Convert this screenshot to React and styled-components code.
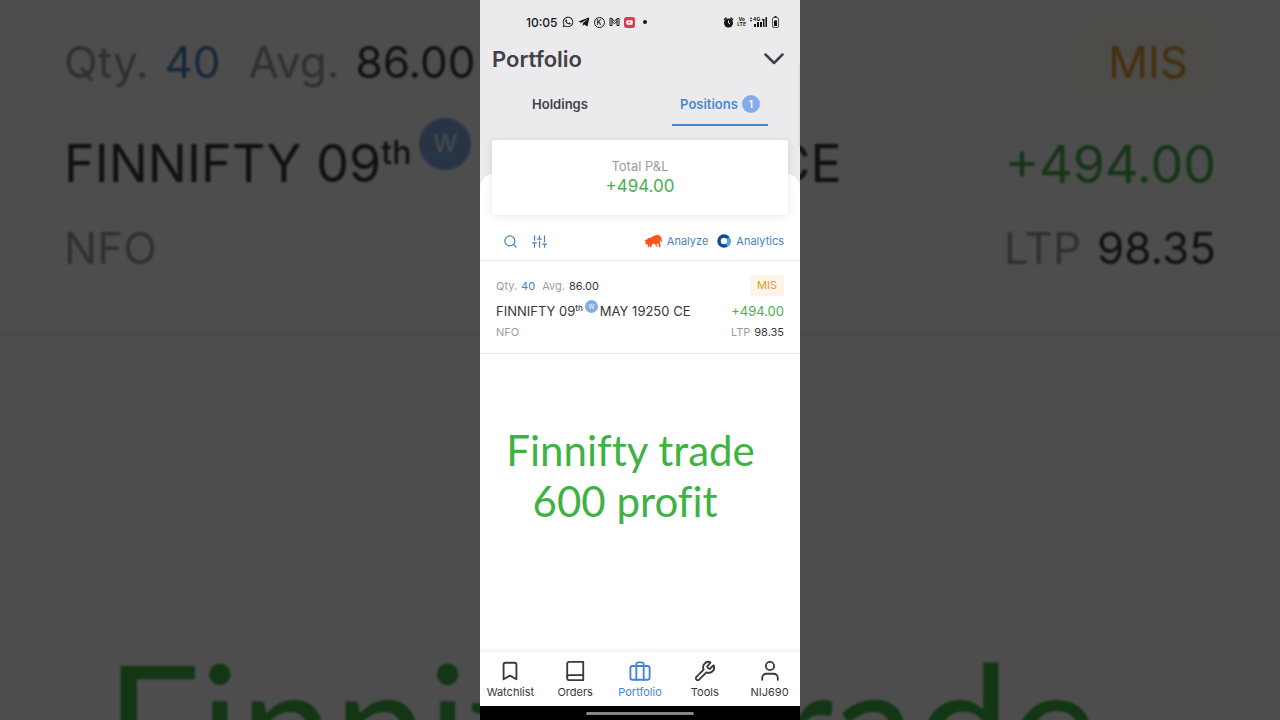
import React from "react"
import styled, { createGlobalStyle } from "styled-components"
import { Bookmark, Wrench, User, Search } from "lucide-react"
import { FaWhatsapp, FaTelegramPlane } from "react-icons/fa"

const GlobalStyle = createGlobalStyle`
    * {
        box-sizing: border-box;
    }
    body {
        margin: 0;
        background: black;
        font-family: Inter, "Liberation Sans", sans-serif;
        color: #424148;
    }
    button {
        font-family: inherit;
        color: inherit;
        background: none;
        border: none;
        padding: 0;
        cursor: pointer;
    }
    a {
        text-decoration: none;
    }
`

const Stage = styled.div`
    display: grid;
    min-height: 100vh;
`

/* enlarged, dimmed copy of the screen that fills the sides */
const Backdrop = styled.div`
    grid-area: 1 / 1;
    height: 100vh;
    overflow: hidden;
    background: white;
    opacity: 0.3;
`

const BackdropContent = styled.div`
    margin-top: -36px;
    filter: blur(1px);
`

const Phone = styled.main`
    grid-area: 1 / 1;
    justify-self: center;
    position: relative;
    display: flex;
    flex-direction: column;
    width: 100%;
    max-width: 320px;
    min-height: 100vh;
    overflow: hidden;
    background: #ebebed;
`

const StatusBar = styled.div`
    display: flex;
    align-items: center;
    justify-content: space-between;
    height: 40px;
    padding: 4px 21px 0 46px;
    color: #161618;
`

const StatusGroup = styled.div`
    display: flex;
    align-items: center;
    gap: ${props => props.$gap}px;
`

const Clock = styled.span`
    font-size: 12px;
    font-weight: 500;
`

const RoundLetter = styled.span`
    width: 11px;
    height: 11px;
    border: 1px solid #161618;
    border-radius: 50%;
    font-size: 7px;
    font-weight: 600;
    line-height: 9px;
    text-align: center;
`

const Dot = styled.span`
    width: 4px;
    height: 4px;
    margin-left: 4px;
    border-radius: 50%;
    background: #161618;
`

const Volte = styled.span`
    font-size: 5px;
    font-weight: 700;
    line-height: 5px;
    text-align: center;
`

const TitleRow = styled.header`
    display: flex;
    align-items: center;
    justify-content: space-between;
    height: 38px;
    padding: 0 16px 0 12px;

    h1 {
        margin: 0;
        font-size: 22px;
        font-weight: 600;
    }
    button {
        display: flex;
    }
`

const Tabs = styled.div`
    display: grid;
    grid-template-columns: 1fr 1fr;
    height: 48px;
    padding: 6px 0 0;
    margin-bottom: 48px;
`

const Tab = styled.button`
    && {
        display: flex;
        align-items: center;
        justify-self: center;
        gap: 4px;
        padding: 0 8px;
        font-size: 13px;
        font-weight: 600;
        color: ${props => props.$active ? "#4987d0" : "#424148"};
        border-bottom: 2px solid ${props => props.$active ? "#4987d0" : "transparent"};
    }
`

const Count = styled.span`
    width: 18px;
    height: 18px;
    border-radius: 50%;
    background: #82ade9;
    color: white;
    font-size: 10px;
    line-height: 18px;
    text-align: center;
`

const ScrollMark = styled.div`
    position: absolute;
    top: 63px;
    right: 0;
    width: 2px;
    height: 84px;
    border-radius: 2px 0 0 2px;
    background: #dedee0;
`

const Sheet = styled.section`
    flex: 1;
    display: flex;
    flex-direction: column;
    background: white;
    border-radius: 14px 14px 0 0;
`

const TotalCard = styled.div`
    display: flex;
    flex-direction: column;
    align-items: center;
    justify-content: center;
    height: 75px;
    margin: -34px 12px 0;
    padding-bottom: 1px;
    background: white;
    border-radius: 3px;
    box-shadow: 0 1px 8px rgba(0, 0, 0, 0.1);
`

const TotalLabel = styled.span`
    font-size: 13px;
    line-height: 18px;
    color: #9d9ca4;
`

const TotalValue = styled.span`
    font-size: 17px;
    line-height: 22px;
    color: #4caf50;
`

const Toolbar = styled.div`
    display: flex;
    align-items: center;
    justify-content: space-between;
    height: 46px;
    padding: 7px 16px 0 23px;
    border-bottom: 1px solid #ececee;
    color: #4a80bb;
`

const ToolGroup = styled.div`
    display: flex;
    align-items: center;
    gap: ${props => props.$gap}px;

    button {
        display: flex;
    }
`

const ToolLink = styled.a`
    display: flex;
    align-items: center;
    gap: 5px;
    font-size: 11px;
    color: #4a80bb;
`

/* $k is the magnification: 1 on the phone, 4 in the backdrop */
const PositionBox = styled.article`
    display: flex;
    flex-direction: column;
    padding: ${props => 14 * props.$k}px ${props => 16 * props.$k}px ${props => 13 * props.$k}px;
    border-bottom: ${props => props.$k}px solid #ececee;
    font-size: ${props => 11 * props.$k}px;
`

const Line = styled.div`
    display: flex;
    align-items: center;
    justify-content: space-between;
    height: ${props => props.$h * props.$k}px;
    margin-bottom: ${props => (props.$mb || 0) * props.$k}px;
`

const Figures = styled.div`
    display: flex;
    gap: ${props => 4 * props.$k}px;
    color: #9d9ca4;

    b {
        font-weight: 400;
        color: #38373d;
    }
    b.qty {
        color: #4a80bb;
        margin-right: ${props => 3 * props.$k}px;
    }
`

const Product = styled.span`
    padding: 0 ${props => 7 * props.$k}px;
    line-height: ${props => 21 * props.$k}px;
    background: ${props => props.$k > 1 ? "#fffaf0" : "#fef5e8"};
    color: #dd9a2b;
`

const Instrument = styled.div`
    display: flex;
    align-items: center;
    font-size: ${props => 13 * props.$k}px;
    line-height: ${props => 18 * props.$k}px;
    color: #38373d;

    sup {
        font-size: ${props => 8 * props.$k}px;
        font-weight: 500;
        line-height: 0;
    }
`

const Weekly = styled.span`
    width: ${props => 13 * props.$k}px;
    height: ${props => 13 * props.$k}px;
    margin: 0 ${props => 2 * props.$k}px ${props => 10 * props.$k}px;
    border-radius: 50%;
    background: #82ade9;
    color: white;
    font-size: ${props => 6 * props.$k}px;
    line-height: ${props => 13 * props.$k}px;
    text-align: center;
`

const Profit = styled.span`
    font-size: ${props => 13 * props.$k}px;
    color: #4caf50;
`

const Caption = styled.p`
    flex: 1;
    margin: 0;
    padding: ${props => 71 * props.$k}px ${props => 19 * props.$k}px 0 0;
    font-family: Lato, "Liberation Sans", sans-serif;
    font-size: ${props => 42 * props.$k}px;
    font-weight: 400;
    line-height: ${props => 51 * props.$k}px;
    font-variant-ligatures: none;
    text-align: center;
    white-space: nowrap;
    color: #3fb244;
`

const NavBar = styled.nav`
    display: flex;
    height: 54px;
    padding-top: 8px;
    margin: 0 -2px;
    background: white;
    box-shadow: 0 -1px 6px rgba(0, 0, 0, 0.08);
`

const NavItem = styled.a`
    flex: 1 1 0;
    display: flex;
    flex-direction: column;
    align-items: center;
    gap: 3px;
    font-size: 11px;
    line-height: 14px;
    color: ${props => props.$active ? "#4184d9" : "#38373d"};
`

const GestureBar = styled.div`
    display: flex;
    justify-content: center;
    align-items: center;
    height: 14px;
    background: black;

    span {
        width: 108px;
        height: 3px;
        border-radius: 2px;
        background: #858585;
    }
`

const stroke = {
    fill: "none",
    stroke: "currentColor",
    strokeWidth: 2,
    strokeLinecap: "round",
    strokeLinejoin: "round"
}

const OrdersIcon = () => (
    <svg width="22" height="22" viewBox="0 0 24 24" {...stroke}>
        <path d="M5.500 2H21v20H5.500A2 2 0 0 1 3.500 20V4a2 2 0 0 1 2-2z" />
        <path d="M3.500 18.500a2 2 0 0 1 2-2H21" />
    </svg>
)

const PortfolioIcon = () => (
    <svg width="22" height="22" viewBox="0 0 24 24" {...stroke}>
        <rect x="1.500" y="6.500" width="21" height="15" rx="2.500" />
        <path d="M8 21.500V4.500a2 2 0 0 1 2-2h4a2 2 0 0 1 2 2v17" />
    </svg>
)

const UserIcon = () => (
    <svg width="22" height="22" viewBox="0 0 24 24" {...stroke}>
        <circle cx="12" cy="6.500" r="4.500" />
        <path d="M3.500 21.500v-2a4.500 4.500 0 0 1 4.500-4.500h8a4.500 4.500 0 0 1 4.500 4.500v2" />
    </svg>
)

const ChevronIcon = () => (
    <svg width="20" height="12" viewBox="0 0 20 12" {...stroke} strokeWidth="2.500">
        <path d="M1.500 1.500L10 10l8.500-8.500" />
    </svg>
)

const SlidersIcon = () => (
    <svg width="15" height="15" viewBox="0 0 24 24" {...stroke}>
        <path d="M4 21v-7M4 10V3M12 21v-9M12 8V3M20 21v-5M20 12V3M1 14h6M9 8h6M17 16h6" />
    </svg>
)

const MailIcon = () => (
    <svg width="11" height="10" viewBox="0 0 22 20" {...stroke}>
        <path d="M2 3v14h4V9l5 4 5-4v8h4V3h-3l-6 5-6-5zM6 9V4M16 9V4" />
    </svg>
)

const VideoIcon = () => (
    <svg width="11" height="11" viewBox="0 0 24 24">
        <rect width="24" height="24" rx="6" fill="#dd3a4d" />
        <rect x="5" y="7" width="14" height="10" rx="3" fill="white" />
        <path d="M10 9.500v5l4-2.500z" fill="#dd3a4d" />
    </svg>
)

const AlarmIcon = () => (
    <svg width="11" height="11" viewBox="0 0 22 22">
        <circle cx="11" cy="12" r="9" fill="currentColor" />
        <path d="M3 5l3-3M19 5l-3-3" stroke="currentColor" strokeWidth="3" strokeLinecap="round" />
        <path d="M11 7v5l3 2" fill="none" stroke="#ebebed" strokeWidth="2" />
    </svg>
)

const SignalIcon = () => (
    <svg width="20" height="12" viewBox="0 0 20 12" fill="currentColor">
        <path d="M1 3l1-2 1 2zM1 4h2L2 6z" />
        <text x="4" y="5" fontSize="5" fontWeight="700">4G</text>
        <text x="12" y="5" fontSize="5" fontWeight="700">+</text>
        <path d="M5 8h2v3H5zM8 6h2v5H8zM11 6h2v5h-2zM14 3h1.500v8H14zM16.500 1H18v10h-1.500z" />
    </svg>
)

const BatteryIcon = () => (
    <svg width="7" height="12" viewBox="0 0 7 12">
        <path d="M2.500 0h2v1.500h-2z" fill="currentColor" />
        <rect x="0.500" y="1.500" width="6" height="10" rx="1.500" fill="none" stroke="currentColor" opacity="0.7" />
        <path d="M2 4.500h3V10H2z" fill="currentColor" />
    </svg>
)

const BullIcon = () => (
    <svg width="18" height="14" viewBox="0 0 54 42">
        <path
            fill="#f9541b"
            d="M1 19l7-2 5-5 7-1 8-5 13-4 7 3 4 6 2 10-2 4-3-7-1 9 2 13h-5l-2-12-5 2 1 8h-3l-3-9-8 1-4 10h-4v-8l-3 8h-3l1-9-5 1-3-5 1-5z"
        />
    </svg>
)

const RingIcon = () => (
    <svg width="14" height="14" viewBox="0 0 28 28" fill="none" strokeWidth="7">
        <circle cx="14" cy="14" r="10" stroke="#0d4b96" />
        <path d="M22 8A10 10 0 0 1 19 22.600" stroke="#45aeea" />
    </svg>
)

const navItems = [
    { name: "Watchlist", icon: <Bookmark size={22} /> },
    { name: "Orders", icon: <OrdersIcon /> },
    { name: "Portfolio", icon: <PortfolioIcon />, active: true },
    { name: "Tools", icon: <Wrench size={22} /> },
    { name: "NIJ690", icon: <UserIcon /> }
]

const Position = ({ k }) => {
    return (
        <PositionBox $k={k}>
            <Line $k={k} $h={21} $mb={6}>
                <Figures $k={k}>
                    <span>Qty.</span> <b className="qty">40</b>
                    <span>Avg.</span> <b>86.00</b>
                </Figures>
                <Product $k={k}>MIS</Product>
            </Line>
            <Line $k={k} $h={18} $mb={4}>
                <Instrument $k={k}>
                    <span>FINNIFTY 09<sup>th</sup></span>
                    <Weekly $k={k}>W</Weekly>
                    <span>MAY 19250 CE</span>
                </Instrument>
                <Profit $k={k}>+494.00</Profit>
            </Line>
            <Line $k={k} $h={16}>
                <Figures $k={k}>NFO</Figures>
                <Figures $k={k}><span>LTP</span> <b>98.35</b></Figures>
            </Line>
        </PositionBox>
    )
}

const Note = ({ k }) => (
    <Caption $k={k}>Finnifty trade<br />600 profit&nbsp;</Caption>
)

const App = () => {
    return (
        <Stage>
            <GlobalStyle />
            <Backdrop aria-hidden="true">
                <BackdropContent>
                    <Position k={4} />
                    <Note k={4} />
                </BackdropContent>
            </Backdrop>
            <Phone>
                <StatusBar>
                    <StatusGroup $gap={4}>
                        <Clock>10:05</Clock>
                        <FaWhatsapp size={12} />
                        <FaTelegramPlane size={12} />
                        <RoundLetter>K</RoundLetter>
                        <MailIcon />
                        <VideoIcon />
                        <Dot />
                    </StatusGroup>
                    <StatusGroup $gap={3}>
                        <AlarmIcon />
                        <Volte>Vo<br />LTE</Volte>
                        <SignalIcon />
                        <BatteryIcon />
                    </StatusGroup>
                </StatusBar>
                <TitleRow>
                    <h1>Portfolio</h1>
                    <button aria-label="Expand"><ChevronIcon /></button>
                </TitleRow>
                <Tabs role="tablist">
                    <Tab role="tab" aria-selected="false">Holdings</Tab>
                    <Tab role="tab" aria-selected="true" $active>Positions <Count>1</Count></Tab>
                </Tabs>
                <ScrollMark />
                <Sheet>
                    <TotalCard>
                        <TotalLabel>Total P&amp;L</TotalLabel>
                        <TotalValue>+494.00</TotalValue>
                    </TotalCard>
                    <Toolbar>
                        <ToolGroup $gap={14}>
                            <button aria-label="Search"><Search size={15} /></button>
                            <button aria-label="Filter"><SlidersIcon /></button>
                        </ToolGroup>
                        <ToolGroup $gap={9}>
                            <ToolLink href="#analyze"><BullIcon />Analyze</ToolLink>
                            <ToolLink href="#analytics"><RingIcon />Analytics</ToolLink>
                        </ToolGroup>
                    </Toolbar>
                    <Position k={1} />
                    <Note k={1} />
                </Sheet>
                <NavBar>
                    {navItems.map(item => (
                        <NavItem key={item.name} href={"#" + item.name} $active={item.active}>
                            {item.icon}
                            {item.name}
                        </NavItem>
                    ))}
                </NavBar>
                <GestureBar><span /></GestureBar>
            </Phone>
        </Stage>
    )
}

export default App
